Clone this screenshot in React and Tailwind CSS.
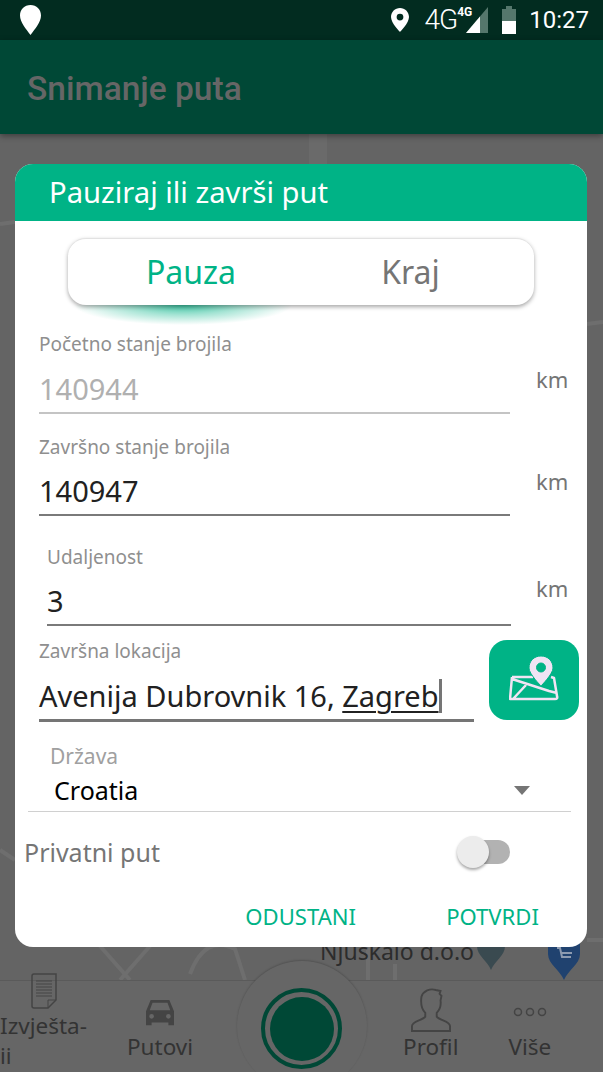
import React from 'react';

const noto = "font-['Noto_Sans',sans-serif]";

const Pin = ({ className }) => (
    <svg className={className} viewBox="0 0 24 32" fill="currentColor">
        <path fillRule="evenodd" d="M12 0C5.4 0 0 5.3 0 12c0 8 12 20 12 20s12-12 12-20C24 5.3 18.600 0 12 0zm0 16.500a4.500 4.500 0 110-9 4.500 4.500 0 010 9z" />
    </svg>
);

const MapPinButton = () => (
    <div className="w-[90px] h-[80px] rounded-[18px] bg-[#00b386] flex items-center justify-center shrink-0">
        <svg width="50" height="48" viewBox="0 0 50 48" fill="none">
            <path d="M3 21H24M3 21L1 43H46Q49 43 48 40L45 22 42 21M3 23L40 35 48 37M4 43L17 29" stroke="#f0e4f4" strokeWidth="2.500" strokeLinejoin="round" />
            <path fillRule="evenodd" fill="#f0e4f4" stroke="#00b386" strokeWidth="1" d="M32 0C25 0 20 5 20 12c0 6 12 18 12 18s12-12 12-18C44 5 39 0 32 0zm0 16a4.500 4.500 0 110-9 4.500 4.500 0 010 9z" />
        </svg>
    </div>
);

const NavItem = ({ icon, label, className }) => (
    <div className={`flex flex-col items-center text-[#333333] ${className}`}>
        {icon}
        <span className="text-[22.5px] leading-[30px]">{label}</span>
    </div>
);

export default function App() {
    return (
        <div className={`relative w-[603px] h-[1072px] overflow-hidden flex flex-col bg-[#646464] ${noto}`}>
            {/* Status bar */}
            <div className="h-[40px] shrink-0 bg-[#022c20] flex items-center pl-[20px] pr-[14px] text-white">
                <svg width="21" height="30" viewBox="0 0 21 30" fill="currentColor">
                    <path d="M10.500 0C4.500 0 0 4.500 0 10.500 0 17 6 24 10.500 30 15 24 21 17 21 10.500 21 4.500 16.500 0 10.500 0z" />
                </svg>
                <Pin className="w-[18px] h-[26px] ml-auto" />
                <span className="ml-[15px] font-['Roboto',sans-serif] text-[28px] leading-none tracking-[-1px] font-light">4G</span>
                <span className="font-['Roboto',sans-serif] text-[12px] font-bold leading-none -mt-[16px]">4G</span>
                <svg className="-ml-[6px]" width="22" height="26" viewBox="0 0 22 26">
                    <path d="M0 26 L22 0 V26Z" fill="#55776c" />
                    <path d="M0 26 L14 9.500 V26Z" fill="#ffffff" />
                </svg>
                <svg className="ml-[14px]" width="14" height="28" viewBox="0 0 14 28">
                    <path d="M4 0h6v3h4v25H0V3h4z" fill="#55776c" />
                    <path d="M0 15h14v13H0z" fill="#ffffff" />
                </svg>
                <span className="ml-[13px] font-['Roboto',sans-serif] text-[24px] leading-none">10:27</span>
            </div>

            {/* App bar */}
            <div className="h-[94px] shrink-0 bg-[#004836] flex items-center pl-[27px] pt-[4px] shadow-[0_2px_6px_rgba(0,0,0,0.4)] z-10">
                <span className="font-['Roboto',sans-serif] font-medium text-[33.5px] text-[#666666]">Snimanje puta</span>
            </div>

            {/* Map behind the dialog */}
            <div className="relative flex-1">
                <svg className="absolute inset-0" width="603" height="846" viewBox="0 0 603 846" fill="none" stroke="#6e6e6e" strokeWidth="4">
                    <path d="M318 0V30" strokeWidth="18" stroke="#6a6a6a" />
                    <path d="M0 90L15 88M587 190L603 188M0 716L15 726M587 806H603M100 812L130 846M150 812L120 846M190 840Q205 800 235 815L245 846M368 810V846M395 830V846" />
                </svg>
                <span className="absolute left-[320px] top-[802px] text-[23px] leading-[30px] text-[#2c2c2c]">Njuskalo d.o.o</span>
                <svg className="absolute left-[477px] top-[812px]" width="28" height="24" viewBox="0 0 28 24"><path d="M0 0H28C28 10 18 14 14 24 10 14 0 10 0 0z" fill="#3a4a50" /></svg>
                <svg className="absolute left-[548px] top-[806px]" width="32" height="40" viewBox="0 0 32 40"><path d="M0 0H32V14C32 24 20 30 16 40 12 30 0 24 0 14z" fill="#20426f" /><path d="M9 8h3l2 9h9M14 13h10" stroke="#8d9bb0" strokeWidth="2" fill="none" /></svg>
            </div>

            {/* Bottom nav */}
            <div className="relative h-[92px] shrink-0 bg-[#666666] border-t border-[#5a5a5a] flex items-end">
                <div className="absolute left-[237px] -top-[20px] w-[130px] h-[130px] rounded-full bg-[#666666] shadow-[0_-1px_2px_rgba(0,0,0,0.18)]" />
                <div className="absolute left-[261px] top-[7px] w-[81px] h-[81px] rounded-full border-[4px] border-[#004836] flex items-center justify-center">
                    <div className="w-[64px] h-[64px] rounded-full bg-[#004836]" />
                </div>

                <div className="w-[100px] relative text-[#333333] text-[22.5px] leading-[30px] pb-[1px]">
                    <svg className="absolute left-[30px] -top-[38px]" width="28" height="36" viewBox="0 0 28 36" fill="none" stroke="#444444" strokeWidth="1.500">
                        <path d="M2 3Q2 1 4 1H26V27L18 35H4Q2 35 2 33z" />
                        <path d="M26 27H18V35M6 8H22M6 11H22M6 14H22M6 17H22M6 20H22M6 23H22" strokeWidth="1" />
                    </svg>
                    <span>Izvješta-</span>
                    <br />
                    <span>ii</span>
                </div>
                <NavItem
                    className="ml-[27px] pb-[10px]"
                    label="Putovi"
                    icon={
                        <svg width="30" height="28" viewBox="0 0 32 30" fill="#444444" className="mb-[4px]">
                            <path fillRule="evenodd" d="M6 0H26L31 12V27H25V24H7V27H1V12zM8 3 5 11H27L24 3zM7 15a2.500 2.500 0 100 5 2.500 2.500 0 000-5zM25 15a2.500 2.500 0 100 5 2.500 2.500 0 000-5z" />
                        </svg>
                    }
                />
                <NavItem
                    className="ml-[210px] pb-[10px]"
                    label="Profil"
                    icon={
                        <svg width="40" height="44" viewBox="0 0 42 46" fill="none" stroke="#444444" strokeWidth="2">
                            <path d="M1 45V40C1 35 12 34 15 30 V26C11 22 10 16 11 9 13 3 20 0 26 2L31 3 30 6 32 8 31 13C32 20 29 24 27 26V30C30 34 41 35 41 40V45z" />
                        </svg>
                    }
                />
                <NavItem
                    className="ml-[50px] pb-[10px]"
                    label="Više"
                    icon={
                        <svg width="34" height="12" viewBox="0 0 34 12" fill="none" stroke="#444444" strokeWidth="1.500" className="mb-[14px]">
                            <circle cx="5" cy="6" r="3.500" />
                            <circle cx="17" cy="6" r="3.500" />
                            <circle cx="29" cy="6" r="3.500" />
                        </svg>
                    }
                />
            </div>

            {/* Dialog */}
            <div className="absolute left-[15px] top-[164px] w-[572px] h-[783px] rounded-[18px] bg-white overflow-hidden flex flex-col">
                <div className="h-[57px] shrink-0 bg-[#00b386] flex items-center pl-[34px] pt-[1px]">
                    <span className="text-[29.2px] leading-none text-white">Pauziraj ili završi put</span>
                </div>

                {/* Tabs */}
                <div className="relative mx-[53px] mt-[17px] h-[67px] shrink-0">
                    <div className="absolute left-[6px] top-[67px] w-[218px] h-[20px] bg-[radial-gradient(ellipse_50%_100%_at_50%_0%,rgba(0,179,134,0.75)_0%,rgba(0,179,134,0.35)_50%,rgba(0,179,134,0)_100%)]" />
                    <div className="relative h-full rounded-[18px] bg-white border-t border-[#e2e2e2] shadow-[0_2px_4px_rgba(0,0,0,0.35)] grid grid-cols-2 items-center text-[32px] leading-none">
                        <span className="text-center text-[#00b386] pl-[13px]">Pauza</span>
                        <span className="text-center text-[#757575] -ml-[14px]">Kraj</span>
                    </div>
                </div>

                {/* Form */}
                <div className="flex pl-[24px] mt-[27px] h-[82px] shrink-0">
                    <div className="w-[471px] border-b-2 border-[#c4c4c4] text-[19px] leading-[24px] text-[#8f8f8f] flex flex-col">
                        <span>Početno stanje brojila</span>
                        <span className="text-[29px] leading-[40px] mt-[13px] text-[#b0b0b0]">140944</span>
                    </div>
                    <span className="ml-[26px] mt-[32px] text-[22px] leading-[30px] text-[#757575]">km</span>
                </div>
                <div className="flex pl-[24px] mt-[21px] h-[81px] shrink-0">
                    <div className="w-[471px] border-b-2 border-[#7a7a7a] text-[19px] leading-[24px] text-[#8f8f8f] flex flex-col">
                        <span>Završno stanje brojila</span>
                        <span className="text-[29px] leading-[40px] mt-[12px] text-[#212121]">140947</span>
                    </div>
                    <span className="ml-[26px] mt-[31px] text-[22px] leading-[30px] text-[#757575]">km</span>
                </div>
                <div className="flex pl-[32px] mt-[29px] h-[81px] shrink-0">
                    <div className="w-[464px] border-b-2 border-[#7a7a7a] text-[19px] leading-[24px] text-[#8f8f8f] flex flex-col">
                        <span>Udaljenost</span>
                        <span className="text-[29px] leading-[40px] mt-[12px] text-[#212121]">3</span>
                    </div>
                    <span className="ml-[25px] mt-[28px] text-[22px] leading-[30px] text-[#757575]">km</span>
                </div>
                <div className="flex pl-[24px] mt-[13px] h-[83px] shrink-0">
                    <div className="w-[435px] h-[83px] border-b-[3px] border-[#757575] text-[19px] leading-[24px] text-[#8f8f8f] flex flex-col">
                        <span>Završna lokacija</span>
                        <span className="text-[29px] leading-[40px] mt-[13px] text-[#212121] whitespace-nowrap">
                            Avenija Dubrovnik 16, <span className="underline decoration-2 underline-offset-4">Zagreb</span>
                            <span className="inline-block w-[3px] h-[34px] bg-[#757575] align-[-6px]" />
                        </span>
                    </div>
                    <div className="ml-[15px] mt-[1px]">
                        <MapPinButton />
                    </div>
                </div>

                {/* Country select */}
                <div className="ml-[13px] mr-[16px] mt-[21px] border-b border-[#d0d0d0] shrink-0">
                    <div className="pl-[22px] text-[21px] leading-[26px] text-[#a0a0a0]">Država</div>
                    <div className="flex items-center pl-[26px] pr-[41px] mt-[5px] pb-[5px] text-[25px] leading-[32px] text-black">
                        <span>Croatia</span>
                        <span className="ml-auto w-0 h-0 border-x-[8px] border-x-transparent border-t-[9px] border-t-[#757575]" />
                    </div>
                </div>

                {/* Private switch */}
                <div className="flex items-center pl-[9px] mt-[23px] h-[34px] shrink-0">
                    <span className="text-[25px] leading-none text-[#757575]">Privatni put</span>
                    <div className="relative ml-auto mr-[77px] w-[54px] h-[28px] flex items-center justify-end">
                        <div className="w-[46px] h-[24px] rounded-full bg-[#b2b2b2]" />
                        <div className="absolute left-[1px] top-[-2px] w-[32px] h-[32px] rounded-full bg-[#ececec] shadow-[0_2px_3px_rgba(0,0,0,0.35)]" />
                    </div>
                </div>

                {/* Actions */}
                <div className="flex justify-end pr-[48px] mt-[32px] text-[22.1px] leading-[30px] text-[#00b386]">
                    <span>ODUSTANI</span>
                    <span className="ml-[90px]">POTVRDI</span>
                </div>
            </div>
        </div>
    );
}
